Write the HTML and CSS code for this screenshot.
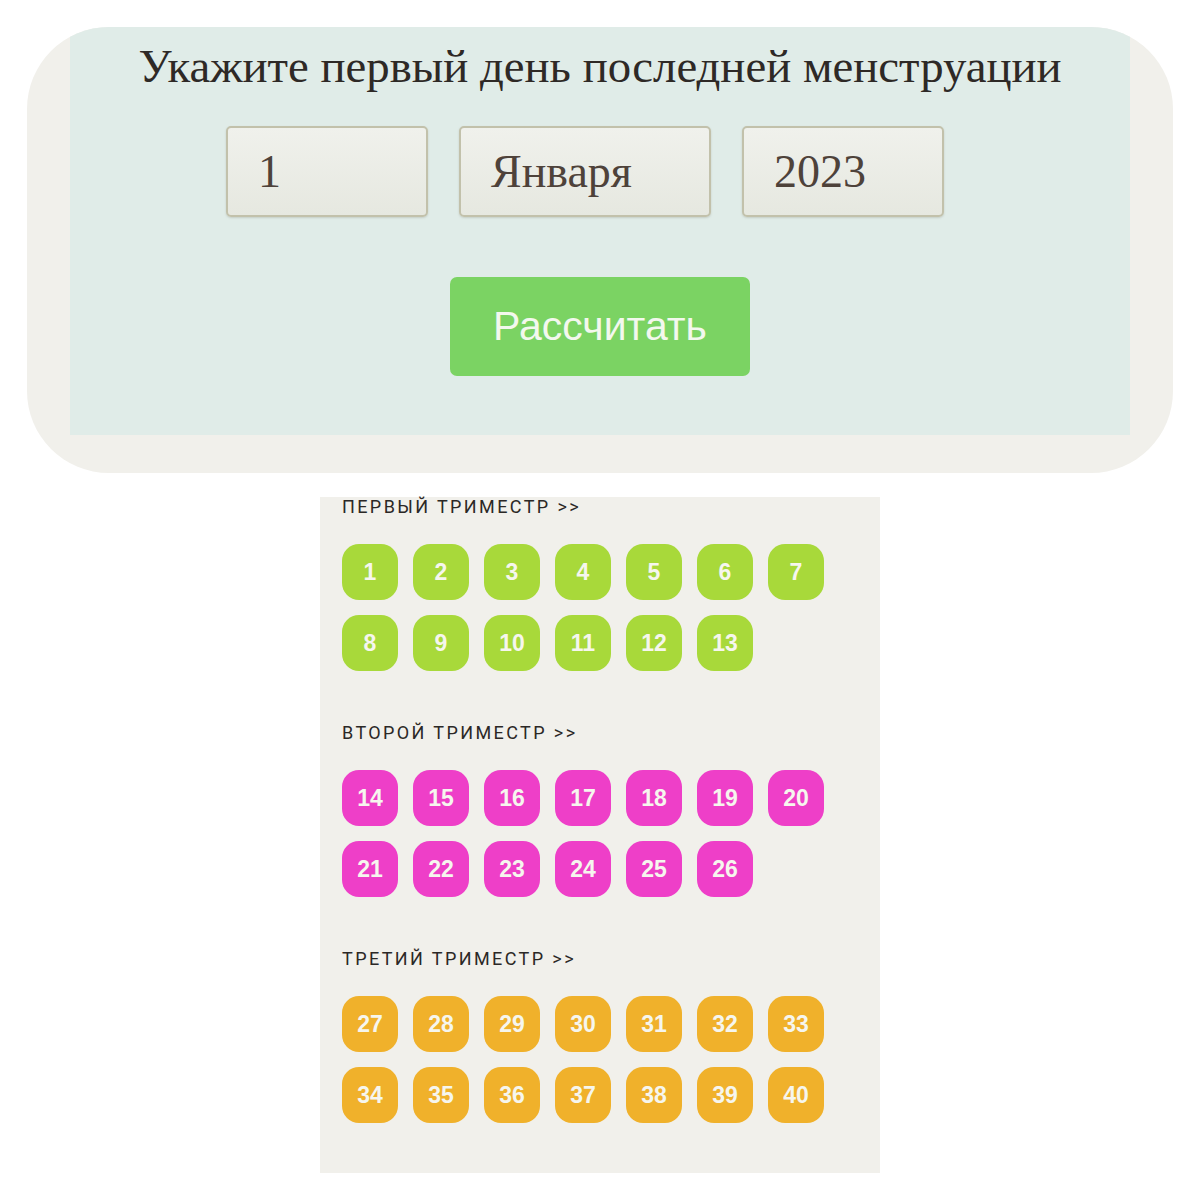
FILE: index.html
```html
<!DOCTYPE html>
<html lang="ru">
<head>
<meta charset="utf-8">
<title>Калькулятор беременности</title>
<link rel="stylesheet" href="styles.css">
</head>
<body>
<div class="page">
  <div class="form-card">
    <div class="form-inner">
      <h1 class="form-title">Укажите первый день последней менструации</h1>
      <div class="fields">
        <div class="field field-day">1</div>
        <div class="field field-month">Января</div>
        <div class="field field-year">2023</div>
      </div>
      <div class="calc-btn">Рассчитать</div>
    </div>
  </div>

  <div class="weeks">
    <div class="tri-title tri-first">ПЕРВЫЙ ТРИМЕСТР &gt;&gt;</div>
    <div class="grid">
      <div class="tile green">1</div><div class="tile green">2</div><div class="tile green">3</div><div class="tile green">4</div><div class="tile green">5</div><div class="tile green">6</div><div class="tile green">7</div>
      <div class="tile green">8</div><div class="tile green">9</div><div class="tile green">10</div><div class="tile green">11</div><div class="tile green">12</div><div class="tile green">13</div>
    </div>
    <div class="tri-title">ВТОРОЙ ТРИМЕСТР &gt;&gt;</div>
    <div class="grid">
      <div class="tile pink">14</div><div class="tile pink">15</div><div class="tile pink">16</div><div class="tile pink">17</div><div class="tile pink">18</div><div class="tile pink">19</div><div class="tile pink">20</div>
      <div class="tile pink">21</div><div class="tile pink">22</div><div class="tile pink">23</div><div class="tile pink">24</div><div class="tile pink">25</div><div class="tile pink">26</div>
    </div>
    <div class="tri-title">ТРЕТИЙ ТРИМЕСТР &gt;&gt;</div>
    <div class="grid">
      <div class="tile orange">27</div><div class="tile orange">28</div><div class="tile orange">29</div><div class="tile orange">30</div><div class="tile orange">31</div><div class="tile orange">32</div><div class="tile orange">33</div>
      <div class="tile orange">34</div><div class="tile orange">35</div><div class="tile orange">36</div><div class="tile orange">37</div><div class="tile orange">38</div><div class="tile orange">39</div><div class="tile orange">40</div>
    </div>
  </div>
</div>
</body>
</html>
```

FILE: styles.css
```css
html, body {
  margin: 0;
  padding: 0;
  background: #ffffff;
}

.page {
  padding-top: 27px;
  width: 1200px;
}

.form-card {
  box-sizing: border-box;
  margin-left: 27px;
  width: 1146px;
  height: 446px;
  border-radius: 82px;
  overflow: hidden;
  background: #f1f0eb;
  padding: 0 43px 38px 43px;
}

.form-inner {
  height: 408px;
  background: #e0ece8;
  display: flex;
  flex-direction: column;
  align-items: center;
}

.form-title {
  margin: 11px 0 0 0;
  font-family: "Liberation Serif", "Times New Roman", serif;
  font-weight: normal;
  font-size: 46.8px;
  line-height: 56px;
  color: #2e2926;
  white-space: nowrap;
}

.fields {
  display: flex;
  gap: 31px;
  margin-top: 32px;
  margin-right: 30px;
}

.field {
  box-sizing: border-box;
  height: 91px;
  border: 2px solid #c2c1ab;
  border-radius: 5px;
  background: linear-gradient(#f0f1ec, #e6e8e0);
  box-shadow: 0 1px 2px rgba(120, 120, 100, 0.25);
  display: flex;
  align-items: center;
  padding-left: 30px;
  font-family: "Liberation Serif", "Times New Roman", serif;
  font-size: 46px;
  color: #4e423a;
}

.field-day { width: 202px; }
.field-month { width: 252px; }
.field-year { width: 202px; }

.calc-btn {
  margin-top: 60px;
  width: 300px;
  height: 99px;
  border-radius: 7px;
  background: #7bd363;
  display: flex;
  align-items: center;
  justify-content: center;
  font-family: "Liberation Sans", Arial, sans-serif;
  font-size: 41px;
  color: #f3f8ee;
}

.weeks {
  box-sizing: border-box;
  margin: 24px 0 0 320px;
  width: 560px;
  background: #f1f0eb;
  padding: 0 22px 50px 22px;
}

.tri-title {
  font-family: Roboto, "Liberation Sans", sans-serif;
  font-size: 18px;
  line-height: 20px;
  letter-spacing: 2.4px;
  color: #2b2826;
  margin-top: 52px;
}

.tri-title.tri-first {
  margin-top: 0;
}

.grid {
  display: grid;
  grid-template-columns: repeat(7, 56px);
  gap: 15px;
  margin-top: 27px;
}

.tile {
  width: 56px;
  height: 56px;
  border-radius: 17px;
  display: flex;
  align-items: center;
  justify-content: center;
  font-family: "Liberation Sans", Arial, sans-serif;
  font-weight: bold;
  font-size: 23px;
  color: #f6f6ee;
}

.green { background: #a8d93a; }
.pink { background: #ee3fc8; }
.orange { background: #f0b12b; }
```
